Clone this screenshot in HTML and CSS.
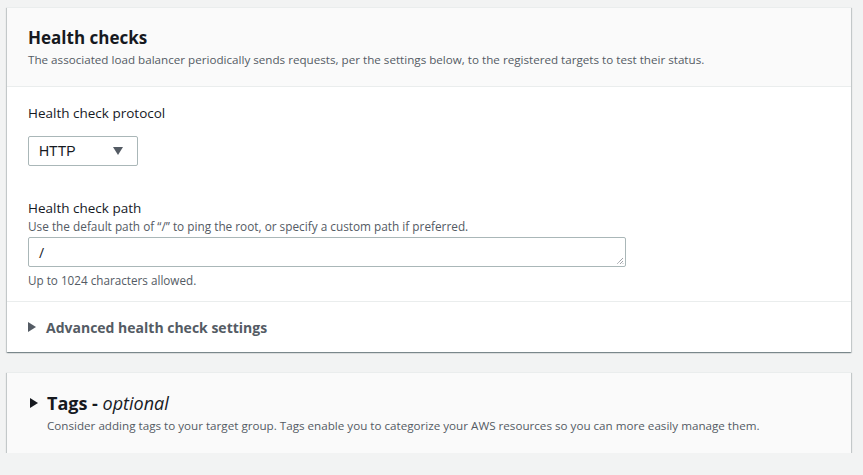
FILE: index.html
```html
<!DOCTYPE html>
<html lang="en">
<head>
<meta charset="utf-8">
<title>Health checks</title>
<link rel="stylesheet" href="styles.css">
</head>
<body>
<main class="page">
  <section class="card">
    <header class="card-header">
      <h2 class="card-title">Health checks</h2>
      <p class="card-desc">The associated load balancer periodically sends requests, per the settings below, to the registered targets to test their status.</p>
    </header>
    <div class="card-body">
      <div class="field field-protocol">
        <label class="field-label">Health check protocol</label>
        <div class="select">
          <span class="select-value">HTTP</span>
          <svg class="select-caret" width="10" height="8" viewBox="0 0 10 8"><path d="M0 0H10L5 8Z" fill="#545b64"/></svg>
        </div>
      </div>
      <div class="field field-path">
        <label class="field-label">Health check path</label>
        <p class="field-desc">Use the default path of “/” to ping the root, or specify a custom path if preferred.</p>
        <div class="textarea">
          <span class="textarea-value">/</span>
          <svg class="resize" width="8" height="8" viewBox="0 0 8 8"><path d="M7 1L1 7M7 4L4 7M7 6.5L6.5 7" stroke="#545b64" stroke-width="0.8" stroke-dasharray="1 0.6"/></svg>
        </div>
        <p class="field-hint">Up to 1024 characters allowed.</p>
      </div>
    </div>
    <div class="card-expander">
      <svg class="caret-right" width="8" height="10" viewBox="0 0 8 10"><path d="M0 0L8 5L0 10Z" fill="#545b64"/></svg>
      <span class="expander-label">Advanced health check settings</span>
    </div>
  </section>

  <section class="card card-tags">
    <div class="tags-title-row">
      <svg class="caret-right dark" width="8" height="10" viewBox="0 0 8 10"><path d="M0 0L8 5L0 10Z" fill="#16191f"/></svg>
      <h2 class="card-title tags-title">Tags - <em class="optional">optional</em></h2>
    </div>
    <p class="card-desc tags-desc">Consider adding tags to your target group. Tags enable you to categorize your AWS resources so you can more easily manage them.</p>
  </section>
</main>
</body>
</html>
```

FILE: styles.css
```css
* { box-sizing: border-box; }
html, body { margin: 0; padding: 0; }
body {
  background: #f2f3f3;
  font-family: "Open Sans", "Noto Sans", sans-serif;
  color: #16191f;
}
.page {
  padding: 7px 12px 0 7px;
  display: flex;
  flex-direction: column;
  gap: 20px;
}
.card {
  background: #fff;
  box-shadow: 0 1px 1px 0 rgba(0,28,36,.3), 1px 1px 1px 0 rgba(0,28,36,.15), -1px 1px 1px 0 rgba(0,28,36,.15);
  border-top: 1px solid #eaeded;
}
.card-header {
  background: #fafafa;
  border-bottom: 1px solid #eaeded;
  padding: 18px 20px 18px 21px;
}
.card-title {
  margin: 0;
  font-size: 17px;
  line-height: 24px;
  font-weight: 700;
}
.card-desc {
  margin: 2px 0 0;
  font-size: 11.65px;
  line-height: 16px;
  color: #545b64;
}
.card-body {
  padding: 16px 20px 13px 21px;
  border-bottom: 1px solid #eaeded;
}
.field-label {
  display: block;
  font-size: 13.5px;
  line-height: 20px;
  color: #16191f;
}
.select {
  margin-top: 13px;
  width: 110px;
  height: 30px;
  border: 1px solid #aab7b8;
  border-radius: 2px;
  display: flex;
  align-items: center;
  justify-content: space-between;
  padding: 0 14px 0 10px;
  background: #fff;
}
.select-value {
  font-family: "Liberation Sans", Arial, sans-serif;
  font-size: 14px;
  color: #16191f;
}
.field-path { margin-top: 32px; }
.field-desc {
  margin: 0;
  font-size: 11.8px;
  line-height: 16px;
  color: #545b64;
}
.textarea {
  margin-top: 3px;
  width: 598px;
  height: 30px;
  border: 1px solid #aab7b8;
  border-radius: 2px;
  position: relative;
  display: flex;
  align-items: center;
  padding: 0 10px;
}
.textarea-value {
  font-size: 14px;
  color: #16191f;
}
.resize {
  position: absolute;
  right: 1px;
  bottom: 1px;
}
.field-hint {
  margin: 5px 0 0;
  font-size: 11.7px;
  line-height: 16px;
  color: #545b64;
}
.card-expander {
  display: flex;
  align-items: center;
  gap: 10px;
  height: 50px;
  padding: 14px 20px 14px 21px;
}
.expander-label {
  font-size: 14px;
  font-weight: 700;
  color: #545b64;
}
.caret-right { flex: none; }
.card-tags {
  background: #fafafa;
  padding: 18px 20px 18px 23px;
  height: 81px;
}
.tags-title-row {
  display: flex;
  align-items: center;
  gap: 9px;
}
.tags-title { font-size: 18px; }
.optional {
  font-weight: 400;
  font-style: italic;
}
.tags-desc {
  margin: 3px 0 0 17px;
}
```
